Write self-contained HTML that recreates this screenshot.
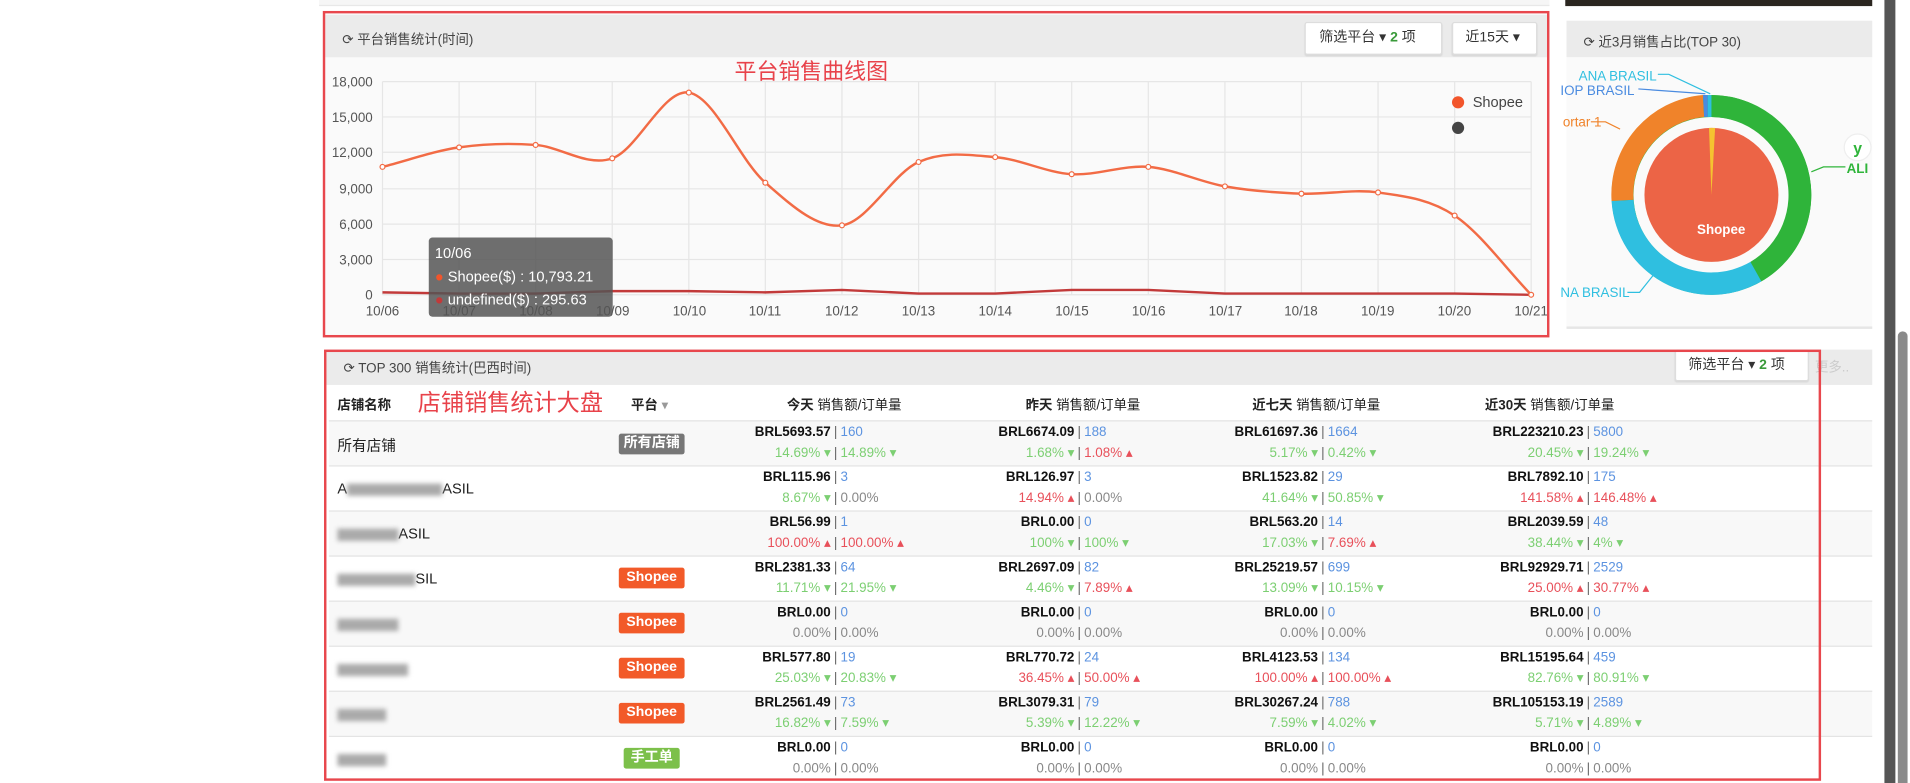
<!DOCTYPE html>
<html><head><meta charset="utf-8"><style>
*{margin:0;padding:0;box-sizing:border-box}
html,body{width:1910px;height:783px;overflow:hidden;background:#fff}
#w{position:absolute;left:0;top:0;width:1568px;height:643px;transform:scale(1.21811);transform-origin:0 0;font-family:"Liberation Sans","Noto Sans CJK SC",sans-serif;color:#333}
.a{position:absolute}
.panel{position:absolute;background:#fafafa}
.hd{position:absolute;left:0;right:0;top:0;background:#ebebeb;font-size:11px;color:#444}
.btn{position:absolute;background:#fff;border:1px solid #ddd;border-radius:2px;font-size:11.5px;color:#333;box-shadow:0 1px 1px rgba(0,0,0,.08);white-space:nowrap}
.red{position:absolute;border:2.5px solid #e8474d}
.row{position:absolute;left:270px;width:1267px;height:37px;border-top:1.5px solid #e3e3e3}
.row.s{background:#f8f8f8}
.c{position:absolute;width:260px;font-size:11px;white-space:nowrap}
.c div{height:17px;line-height:17px;display:flex}
.c .l{width:126px;text-align:right}
.c .p{width:8px;text-align:center;color:#666}
.c b{font-weight:bold;color:#111}
.bl{color:#5c93e0}.g{color:#7ccf72}.r{color:#e8505a}.z{color:#888}
.k1{left:556px}.k2{left:756px}.k3{left:956px}.k4{left:1174px}
.bd{position:absolute;left:508px;width:54px;height:17px;line-height:17px;text-align:center;color:#fff;font-weight:bold;font-size:11.5px;border-radius:2px}
.nm{position:absolute;left:277px;font-size:12px;color:#222}
.bx{display:inline-block;height:10px;background:#aaa;filter:blur(2px);vertical-align:middle}
.th{position:absolute;top:324px;font-size:11px;font-weight:bold;color:#222;white-space:nowrap}
.th span{font-weight:normal}
</style></head><body><div id="w">

<div class="a" style="left:262px;top:0;width:1010px;height:5px;background:#f6f6f6;border-bottom:1px solid #e8e8e8"></div>
<div class="a" style="left:1285px;top:0;width:252px;height:5px;background:#2b2620"></div>

<div class="panel" style="left:267px;top:12px;width:1003px;height:263px">
 <div class="hd" style="height:35px"><span class="a" style="left:14px;top:12px">⟳ 平台销售统计(时间)</span></div>
</div>
<div class="btn" style="left:1071px;top:18px;width:113px;height:27px;line-height:25px;padding-left:11px">筛选平台 ▾ <b style="color:#3a9a3a">2</b> 项</div>
<div class="btn" style="left:1192px;top:18px;width:70px;height:27px;line-height:25px;padding-left:10px">近15天 ▾</div>
<div class="a" style="left:603px;top:45px;font-size:18px;color:#e8424a">平台销售曲线图</div>

<svg class="a" style="left:0;top:0" width="1568" height="643" viewBox="0 0 1568 643">
 <g stroke="#e6e6e6" stroke-width="1">
  <line x1="314" y1="67" x2="1257" y2="67"/><line x1="314" y1="96" x2="1257" y2="96"/><line x1="314" y1="125" x2="1257" y2="125"/><line x1="314" y1="155" x2="1257" y2="155"/><line x1="314" y1="184" x2="1257" y2="184"/><line x1="314" y1="213" x2="1257" y2="213"/><line x1="314" y1="242" x2="1257" y2="242"/>
  <line x1="314" y1="67" x2="314" y2="242"/><line x1="376.9" y1="67" x2="376.9" y2="242"/><line x1="439.7" y1="67" x2="439.7" y2="242"/><line x1="502.6" y1="67" x2="502.6" y2="242"/><line x1="565.5" y1="67" x2="565.5" y2="242"/><line x1="628.3" y1="67" x2="628.3" y2="242"/><line x1="691.2" y1="67" x2="691.2" y2="242"/><line x1="754.1" y1="67" x2="754.1" y2="242"/><line x1="817" y1="67" x2="817" y2="242"/><line x1="879.8" y1="67" x2="879.8" y2="242"/><line x1="942.7" y1="67" x2="942.7" y2="242"/><line x1="1005.6" y1="67" x2="1005.6" y2="242"/><line x1="1068.4" y1="67" x2="1068.4" y2="242"/><line x1="1131.3" y1="67" x2="1131.3" y2="242"/><line x1="1194.2" y1="67" x2="1194.2" y2="242"/><line x1="1257" y1="67" x2="1257" y2="242"/>
 </g>
 <g font-family="Liberation Sans,sans-serif" font-size="11" fill="#555" text-anchor="end">
  <text x="306" y="71">18,000</text><text x="306" y="100">15,000</text><text x="306" y="129">12,000</text><text x="306" y="159">9,000</text><text x="306" y="188">6,000</text><text x="306" y="217">3,000</text><text x="306" y="246">0</text>
 </g>
 <g font-family="Liberation Sans,sans-serif" font-size="11" fill="#555" text-anchor="middle">
  <text x="314" y="259">10/06</text><text x="377" y="259">10/07</text><text x="440" y="259">10/08</text><text x="503" y="259">10/09</text><text x="566" y="259">10/10</text><text x="628" y="259">10/11</text><text x="691" y="259">10/12</text><text x="754" y="259">10/13</text><text x="817" y="259">10/14</text><text x="880" y="259">10/15</text><text x="943" y="259">10/16</text><text x="1006" y="259">10/17</text><text x="1068" y="259">10/18</text><text x="1131" y="259">10/19</text><text x="1194" y="259">10/20</text><text x="1257" y="259">10/21</text>
 </g>
 <path fill="none" stroke="#f26b45" stroke-width="2" d="M314 137C334.96 131.7 355.91 124 376.87 121C397.83 118 418.78 117.5 439.74 119C460.7 120.5 481.65 137.2 502.61 130C523.57 122.8 544.52 72.7 565.48 76C586.44 79.3 607.39 131.8 628.35 150C649.31 168.2 670.26 187.8 691.22 185C712.18 182.2 733.13 142.3 754.09 133C775.05 123.7 796 127.3 816.96 129C837.92 130.7 858.87 141.7 879.83 143C900.79 144.3 921.74 135.3 942.7 137C963.66 138.7 984.61 149.3 1005.57 153C1026.53 156.7 1047.48 158.2 1068.44 159C1089.4 159.8 1110.35 155 1131.31 158C1152.27 161 1173.22 163 1194.18 177C1215.14 191 1236.09 220.3 1257.05 242"/>
 <path fill="none" stroke="#c23a3a" stroke-width="2" d="M314 240L376.9 241L439.7 241L502.6 239L565.5 239L628.3 240L691.2 238L754.1 241L817 241L879.8 238L942.7 238L1005.6 241L1068.4 241L1131.3 241L1194.2 241L1257 242"/>
 <g fill="#fff" stroke="#f26b45" stroke-width="1">
  <circle cx="314" cy="137" r="2"/><circle cx="376.9" cy="121" r="2"/><circle cx="439.7" cy="119" r="2"/><circle cx="502.6" cy="130" r="2"/><circle cx="565.5" cy="76" r="2"/><circle cx="628.3" cy="150" r="2"/><circle cx="691.2" cy="185" r="2"/><circle cx="754.1" cy="133" r="2"/><circle cx="817" cy="129" r="2"/><circle cx="879.8" cy="143" r="2"/><circle cx="942.7" cy="137" r="2"/><circle cx="1005.6" cy="153" r="2"/><circle cx="1068.4" cy="159" r="2"/><circle cx="1131.3" cy="158" r="2"/><circle cx="1194.2" cy="177" r="2"/><circle cx="1257" cy="242" r="2"/>
 </g>
 <circle cx="1197" cy="84" r="5" fill="#f2552b"/>
 <text x="1209" y="88" font-family="Liberation Sans,sans-serif" font-size="12" fill="#444">Shopee</text>
 <circle cx="1197" cy="105" r="5" fill="#444"/>

 <circle cx="1405" cy="160" r="73" fill="none" stroke="#2fb43a" stroke-width="18"/>
 <path d="M1405 78 A82 82 0 0 1 1446 231 L1437 215 A64 64 0 0 0 1405 96Z" fill="#2fb43a"/>
 <path d="M1446 231 A82 82 0 0 1 1323 165 L1341 164 A64 64 0 0 0 1437 215Z" fill="#2fbfe0"/>
 <path d="M1323 165 A82 82 0 0 1 1398 78 L1399 96 A64 64 0 0 0 1341 164Z" fill="#f0832a"/>
 <path d="M1398 78 A82 82 0 0 1 1402 78 L1402 96 A64 64 0 0 0 1399 96Z" fill="#4a8be0"/>
 <path d="M1402 78 A82 82 0 0 1 1405 78 L1405 96 A64 64 0 0 0 1402 96Z" fill="#2fbfe0"/>
 <circle cx="1405" cy="160" r="55" fill="#ec6446"/>
 <path d="M1405 160 L1403 105 A55 55 0 0 1 1408 105Z" fill="#f5c330"/>
 <text x="1413" y="192" text-anchor="middle" font-family="Liberation Sans,sans-serif" font-size="11" font-weight="bold" fill="#fff">Shopee</text>
 <g font-family="Liberation Sans,sans-serif" font-size="11">
  <text x="1296" y="66" fill="#2fbfe0">ANA BRASIL</text>
  <text x="1281" y="78" fill="#4a8be0">IOP BRASIL</text>
  <text x="1283" y="104" fill="#f0832a">ortar 1</text>
  <text x="1281" y="244" fill="#2fbfe0">NA BRASIL</text>
  <text x="1516" y="142" fill="#2fb43a" font-weight="bold">ALI</text>
 </g>
 <g fill="none" stroke-width="1">
  <polyline points="1361,61 1370,61 1404,77" stroke="#2fbfe0"/>
  <polyline points="1345,73 1400,77" stroke="#4a8be0"/>
  <polyline points="1306,100 1318,100 1330,106" stroke="#f0832a"/>
  <polyline points="1336,240 1346,240 1358,225" stroke="#2fbfe0"/>
  <polyline points="1487,141 1497,137 1515,137" stroke="#2fb43a"/>
 </g>
 <circle cx="1525" cy="121" r="11" fill="#fff" stroke="#eee"/>
 <text x="1525" y="126" text-anchor="middle" font-family="Liberation Sans,sans-serif" font-size="13" font-weight="bold" fill="#2fb43a">y</text>
</svg>

<div class="a" style="left:352px;top:195px;width:151px;height:65px;background:rgba(85,85,85,.85);border-radius:3px;color:#fff;font-size:12px;line-height:19px;padding:4px 5px">
 10/06<br><span style="color:#f2552b">●</span> Shopee($) : 10,793.21<br><span style="color:#c23a3a">●</span> undefined($) : 295.63
</div>

<div class="a" style="left:1286px;top:17px;width:251px;height:30px;background:#ebebeb;font-size:11px;color:#444;padding:9px 0 0 14px;z-index:-1">⟳ 近3月销售占比(TOP 30)</div>
<div class="a" style="left:1286px;top:47px;width:251px;height:223px;background:#fafafa;border-bottom:2px solid #e6e6e6;z-index:-1"></div>

<div class="red" style="left:265px;top:9px;width:1007px;height:268px"></div>

<div class="panel" style="left:268px;top:287px;width:1269px;height:356px;background:#fff">
 <div class="hd" style="height:29px"><span class="a" style="left:14px;top:7px">⟳ TOP 300 销售统计(巴西时间)</span></div>
</div>
<div class="btn" style="left:1375px;top:287px;width:110px;height:26px;line-height:24px;padding-left:10px">筛选平台 ▾ <b style="color:#3a9a3a">2</b> 项</div>
<div class="a" style="left:1490px;top:293px;font-size:11px;color:#ccc">更多..</div>

<div class="th" style="left:277px">店铺名称</div>
<div class="a" style="left:343px;top:316px;font-size:19px;color:#e8424a">店铺销售统计大盘</div>
<div class="th" style="left:518px">平台 <span style="color:#999">▾</span></div>
<div class="th" style="left:646px">今天 <span>销售额/订单量</span></div>
<div class="th" style="left:842px">昨天 <span>销售额/订单量</span></div>
<div class="th" style="left:1028px">近七天 <span>销售额/订单量</span></div>
<div class="th" style="left:1219px">近30天 <span>销售额/订单量</span></div>

<div class="row s" style="top:345px"></div>
<div class="row" style="top:382px"></div>
<div class="row s" style="top:419px"></div>
<div class="row" style="top:456px"></div>
<div class="row s" style="top:493px"></div>
<div class="row" style="top:530px"></div>
<div class="row s" style="top:567px"></div>
<div class="row" style="top:604px"></div>

<div class="nm" style="top:357px">所有店铺</div>
<div class="bd" style="top:356px;background:#777">所有店铺</div>
<div class="c k1" style="top:347px"><div><span class="l"><b>BRL5693.57</b></span><span class="p">|</span><span class="bl">160</span></div><div><span class="l g">14.69% ▾</span><span class="p">|</span><span class="g">14.89% ▾</span></div></div>
<div class="c k2" style="top:347px"><div><span class="l"><b>BRL6674.09</b></span><span class="p">|</span><span class="bl">188</span></div><div><span class="l g">1.68% ▾</span><span class="p">|</span><span class="r">1.08% ▴</span></div></div>
<div class="c k3" style="top:347px"><div><span class="l"><b>BRL61697.36</b></span><span class="p">|</span><span class="bl">1664</span></div><div><span class="l g">5.17% ▾</span><span class="p">|</span><span class="g">0.42% ▾</span></div></div>
<div class="c k4" style="top:347px"><div><span class="l"><b>BRL223210.23</b></span><span class="p">|</span><span class="bl">5800</span></div><div><span class="l g">20.45% ▾</span><span class="p">|</span><span class="g">19.24% ▾</span></div></div>

<div class="nm" style="top:394px">A<span class="bx" style="width:78px"></span>ASIL</div>
<div class="c k1" style="top:384px"><div><span class="l"><b>BRL115.96</b></span><span class="p">|</span><span class="bl">3</span></div><div><span class="l g">8.67% ▾</span><span class="p">|</span><span class="z">0.00%</span></div></div>
<div class="c k2" style="top:384px"><div><span class="l"><b>BRL126.97</b></span><span class="p">|</span><span class="bl">3</span></div><div><span class="l r">14.94% ▴</span><span class="p">|</span><span class="z">0.00%</span></div></div>
<div class="c k3" style="top:384px"><div><span class="l"><b>BRL1523.82</b></span><span class="p">|</span><span class="bl">29</span></div><div><span class="l g">41.64% ▾</span><span class="p">|</span><span class="g">50.85% ▾</span></div></div>
<div class="c k4" style="top:384px"><div><span class="l"><b>BRL7892.10</b></span><span class="p">|</span><span class="bl">175</span></div><div><span class="l r">141.58% ▴</span><span class="p">|</span><span class="r">146.48% ▴</span></div></div>

<div class="nm" style="top:431px"><span class="bx" style="width:50px"></span>ASIL</div>
<div class="c k1" style="top:421px"><div><span class="l"><b>BRL56.99</b></span><span class="p">|</span><span class="bl">1</span></div><div><span class="l r">100.00% ▴</span><span class="p">|</span><span class="r">100.00% ▴</span></div></div>
<div class="c k2" style="top:421px"><div><span class="l"><b>BRL0.00</b></span><span class="p">|</span><span class="bl">0</span></div><div><span class="l g">100% ▾</span><span class="p">|</span><span class="g">100% ▾</span></div></div>
<div class="c k3" style="top:421px"><div><span class="l"><b>BRL563.20</b></span><span class="p">|</span><span class="bl">14</span></div><div><span class="l g">17.03% ▾</span><span class="p">|</span><span class="r">7.69% ▴</span></div></div>
<div class="c k4" style="top:421px"><div><span class="l"><b>BRL2039.59</b></span><span class="p">|</span><span class="bl">48</span></div><div><span class="l g">38.44% ▾</span><span class="p">|</span><span class="g">4% ▾</span></div></div>

<div class="nm" style="top:468px"><span class="bx" style="width:64px"></span>SIL</div>
<div class="bd" style="top:466px;background:#f25a29">Shopee</div>
<div class="c k1" style="top:458px"><div><span class="l"><b>BRL2381.33</b></span><span class="p">|</span><span class="bl">64</span></div><div><span class="l g">11.71% ▾</span><span class="p">|</span><span class="g">21.95% ▾</span></div></div>
<div class="c k2" style="top:458px"><div><span class="l"><b>BRL2697.09</b></span><span class="p">|</span><span class="bl">82</span></div><div><span class="l g">4.46% ▾</span><span class="p">|</span><span class="r">7.89% ▴</span></div></div>
<div class="c k3" style="top:458px"><div><span class="l"><b>BRL25219.57</b></span><span class="p">|</span><span class="bl">699</span></div><div><span class="l g">13.09% ▾</span><span class="p">|</span><span class="g">10.15% ▾</span></div></div>
<div class="c k4" style="top:458px"><div><span class="l"><b>BRL92929.71</b></span><span class="p">|</span><span class="bl">2529</span></div><div><span class="l r">25.00% ▴</span><span class="p">|</span><span class="r">30.77% ▴</span></div></div>

<div class="nm" style="top:505px"><span class="bx" style="width:50px"></span></div>
<div class="bd" style="top:503px;background:#f25a29">Shopee</div>
<div class="c k1" style="top:495px"><div><span class="l"><b>BRL0.00</b></span><span class="p">|</span><span class="bl">0</span></div><div><span class="l z">0.00%</span><span class="p">|</span><span class="z">0.00%</span></div></div>
<div class="c k2" style="top:495px"><div><span class="l"><b>BRL0.00</b></span><span class="p">|</span><span class="bl">0</span></div><div><span class="l z">0.00%</span><span class="p">|</span><span class="z">0.00%</span></div></div>
<div class="c k3" style="top:495px"><div><span class="l"><b>BRL0.00</b></span><span class="p">|</span><span class="bl">0</span></div><div><span class="l z">0.00%</span><span class="p">|</span><span class="z">0.00%</span></div></div>
<div class="c k4" style="top:495px"><div><span class="l"><b>BRL0.00</b></span><span class="p">|</span><span class="bl">0</span></div><div><span class="l z">0.00%</span><span class="p">|</span><span class="z">0.00%</span></div></div>

<div class="nm" style="top:542px"><span class="bx" style="width:58px"></span></div>
<div class="bd" style="top:540px;background:#f25a29">Shopee</div>
<div class="c k1" style="top:532px"><div><span class="l"><b>BRL577.80</b></span><span class="p">|</span><span class="bl">19</span></div><div><span class="l g">25.03% ▾</span><span class="p">|</span><span class="g">20.83% ▾</span></div></div>
<div class="c k2" style="top:532px"><div><span class="l"><b>BRL770.72</b></span><span class="p">|</span><span class="bl">24</span></div><div><span class="l r">36.45% ▴</span><span class="p">|</span><span class="r">50.00% ▴</span></div></div>
<div class="c k3" style="top:532px"><div><span class="l"><b>BRL4123.53</b></span><span class="p">|</span><span class="bl">134</span></div><div><span class="l r">100.00% ▴</span><span class="p">|</span><span class="r">100.00% ▴</span></div></div>
<div class="c k4" style="top:532px"><div><span class="l"><b>BRL15195.64</b></span><span class="p">|</span><span class="bl">459</span></div><div><span class="l g">82.76% ▾</span><span class="p">|</span><span class="g">80.91% ▾</span></div></div>

<div class="nm" style="top:579px"><span class="bx" style="width:40px"></span></div>
<div class="bd" style="top:577px;background:#f25a29">Shopee</div>
<div class="c k1" style="top:569px"><div><span class="l"><b>BRL2561.49</b></span><span class="p">|</span><span class="bl">73</span></div><div><span class="l g">16.82% ▾</span><span class="p">|</span><span class="g">7.59% ▾</span></div></div>
<div class="c k2" style="top:569px"><div><span class="l"><b>BRL3079.31</b></span><span class="p">|</span><span class="bl">79</span></div><div><span class="l g">5.39% ▾</span><span class="p">|</span><span class="g">12.22% ▾</span></div></div>
<div class="c k3" style="top:569px"><div><span class="l"><b>BRL30267.24</b></span><span class="p">|</span><span class="bl">788</span></div><div><span class="l g">7.59% ▾</span><span class="p">|</span><span class="g">4.02% ▾</span></div></div>
<div class="c k4" style="top:569px"><div><span class="l"><b>BRL105153.19</b></span><span class="p">|</span><span class="bl">2589</span></div><div><span class="l g">5.71% ▾</span><span class="p">|</span><span class="g">4.89% ▾</span></div></div>

<div class="nm" style="top:616px"><span class="bx" style="width:40px"></span></div>
<div class="bd" style="top:614px;left:512px;width:46px;background:#7cc04a">手工单</div>
<div class="c k1" style="top:606px"><div><span class="l"><b>BRL0.00</b></span><span class="p">|</span><span class="bl">0</span></div><div><span class="l z">0.00%</span><span class="p">|</span><span class="z">0.00%</span></div></div>
<div class="c k2" style="top:606px"><div><span class="l"><b>BRL0.00</b></span><span class="p">|</span><span class="bl">0</span></div><div><span class="l z">0.00%</span><span class="p">|</span><span class="z">0.00%</span></div></div>
<div class="c k3" style="top:606px"><div><span class="l"><b>BRL0.00</b></span><span class="p">|</span><span class="bl">0</span></div><div><span class="l z">0.00%</span><span class="p">|</span><span class="z">0.00%</span></div></div>
<div class="c k4" style="top:606px"><div><span class="l"><b>BRL0.00</b></span><span class="p">|</span><span class="bl">0</span></div><div><span class="l z">0.00%</span><span class="p">|</span><span class="z">0.00%</span></div></div>

<div class="red" style="left:266px;top:287px;width:1229px;height:354px"></div>

<div class="a" style="left:1547px;top:0;width:9px;height:643px;background:#555"></div>
<div class="a" style="left:1558px;top:272px;width:8px;height:371px;background:#8a8a8a;border-radius:4px 4px 0 0"></div>
</div></body></html>
